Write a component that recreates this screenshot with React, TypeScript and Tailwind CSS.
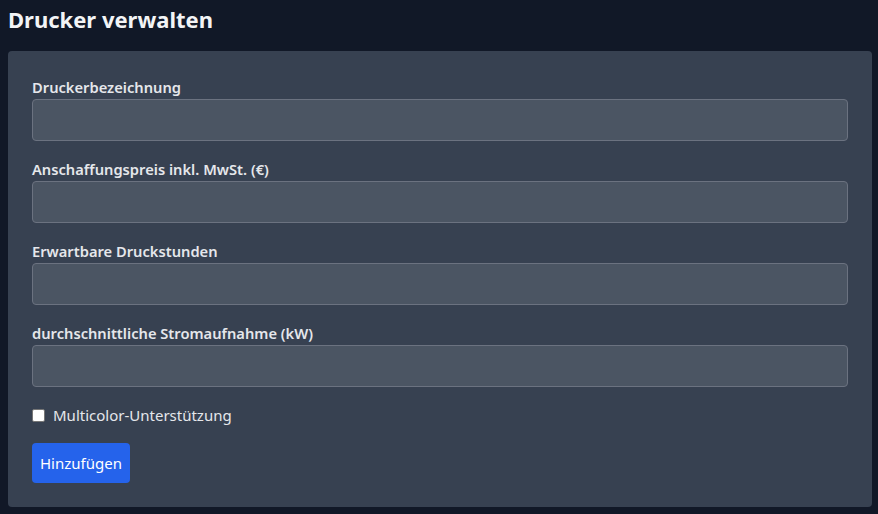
import React from "react";

const fields = [
  "Druckerbezeichnung",
  "Anschaffungspreis inkl. MwSt. (€)",
  "Erwartbare Druckstunden",
  "durchschnittliche Stromaufnahme (kW)",
];

export default function App() {
  return (
    <div
      className="min-h-[514px] bg-[#111827] pl-2 pr-[6px] pt-[3px] text-[#e5e7eb]"
      style={{ fontFamily: '"Noto Sans", "Open Sans", sans-serif' }}
    >
      <h1 className="mb-4 text-[22px] font-bold leading-8 text-[#f3f4f6]">Drucker verwalten</h1>
      <div className="rounded bg-[#374151] p-6">
        {fields.map((f) => (
          <div key={f} className="mb-4">
            <label className="block text-[14.7px] font-semibold leading-6">{f}</label>
            <input
              type="text"
              className="block h-[42px] w-full rounded border border-[#6b7280] bg-[#4b5563] px-3 text-white outline-none"
            />
          </div>
        ))}
        <label className="mb-4 flex h-6 items-center gap-2 text-[15px]">
          <input type="checkbox" className="h-[13px] w-[13px] appearance-none rounded-[2px] border border-[#767676] bg-white" />
          <span>Multicolor-Unterstützung</span>
        </label>
        <button className="h-10 rounded bg-[#2563eb] px-2 text-[15px] text-white">Hinzufügen</button>
      </div>
    </div>
  );
}
